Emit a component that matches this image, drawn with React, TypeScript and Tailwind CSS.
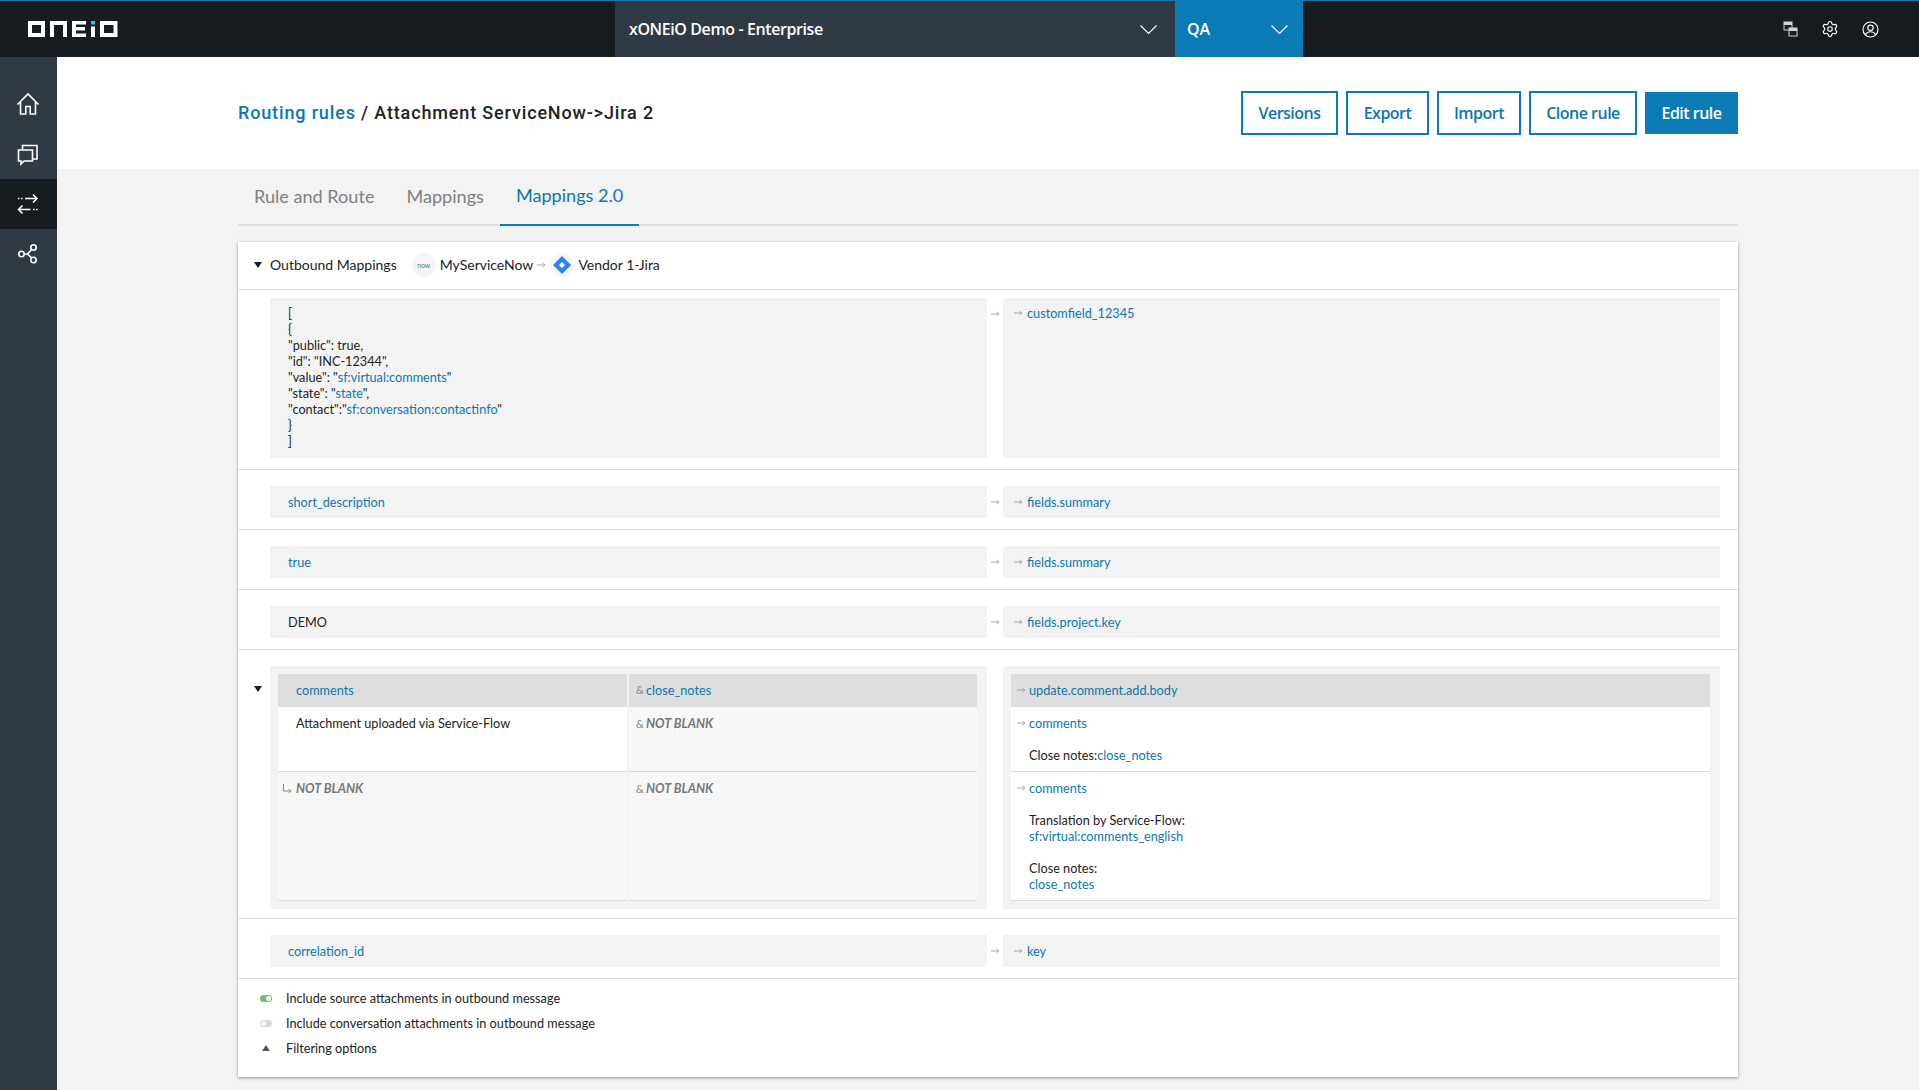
import { Settings } from 'lucide-react';
import type { ReactNode } from 'react';

// small helpers for the repeated glyphs
function Arrow({ className = '' }: { className?: string }) {
  return (
    <svg width="9" height="6" viewBox="0 0 9 6" fill="none" className={`flex-shrink-0 ${className}`} aria-hidden="true">
      <path d="M0 3h7.5M5.5 1l2.500 2-2.500 2" stroke="#a9a9a9" strokeWidth="1" />
    </svg>
  );
}

function Caret({ up = false, className = '' }: { up?: boolean; className?: string }) {
  return (
    <svg width="8" height="6" viewBox="0 0 8 6" className={className} aria-hidden="true">
      <path d={up ? 'M4 0l4 6H0z' : 'M0 0h8L4 6z'} fill={up ? '#555' : '#1c1c1c'} />
    </svg>
  );
}

function Chevron() {
  return (
    <svg width="17" height="9" viewBox="0 0 17 9" fill="none" aria-hidden="true">
      <path d="M.5.5l8 8 8-8" stroke="#fff" strokeWidth="1.1" />
    </svg>
  );
}

function Logo() {
  return (
    <svg width="90" height="17" viewBox="0 0 90 17" aria-hidden="true">
      <path fillRule="evenodd" d="M0 0h17v16H0zM4 4v8h9V4z" fill="#fff" />
      <path d="M22 0h17v16h-4V4h-9v12h-4z" fill="#fff" />
      <path d="M44 0h14v3.5H48V6h9v3.5h-9v3H58V16H44z" fill="#fff" />
      <rect x="63" y="0" width="4" height="3.5" fill="#2cc3e8" />
      <rect x="63" y="5.5" width="4" height="10.5" fill="#fff" />
      <path fillRule="evenodd" d="M72 0h17.5v16H72zM76 4v8h9.5V4z" fill="#fff" />
    </svg>
  );
}

function HomeIcon() {
  return (
    <svg width="24" height="24" viewBox="0 0 24 24" fill="none" stroke="#fff" strokeWidth="1.6" aria-hidden="true">
      <path d="M1.500 12.500L12 2l10.500 10.500M4.500 10v12h5.300v-7.500h4.400V22h5.300V10" />
    </svg>
  );
}

function ChatIcon() {
  return (
    <svg width="24" height="24" viewBox="0 0 24 24" fill="none" stroke="#fff" strokeWidth="1.6" aria-hidden="true">
      <path d="M6.500 8V3.500H21V17h-4" />
      <path d="M2.500 8h14v11H8l-3 3v-3H2.500z" />
    </svg>
  );
}

function RouteIcon() {
  return (
    <svg width="24" height="24" viewBox="0 0 24 24" fill="none" stroke="#fff" strokeWidth="1.5" aria-hidden="true">
      <path d="M9 6.500h12M17 2.500l4 4-4 4" />
      <path d="M2 6.500h1.500M5 6.500h1.500" />
      <path d="M14.500 17.500H2.500M6.500 13.500l-4 4 4 4" />
      <path d="M17 17.500h1.500M20 17.500h1.500" />
    </svg>
  );
}

function ShareIcon() {
  return (
    <svg width="24" height="24" viewBox="0 0 24 24" fill="none" stroke="#fff" strokeWidth="1.6" aria-hidden="true">
      <circle cx="5.500" cy="12" r="2.700" />
      <circle cx="17.500" cy="5.500" r="2.700" />
      <circle cx="17.500" cy="18" r="2.700" />
      <path d="M8.200 12h3.300l4.200-4.500M11.500 12l4.200 4" />
    </svg>
  );
}

function WindowsIcon() {
  return (
    <svg width="15" height="16" viewBox="0 0 15 16" fill="none" aria-hidden="true">
      <rect x="1" y="1" width="8" height="8" stroke="#d4d4d4" strokeWidth="1" fill="#171c20" />
      <rect x="1" y="1" width="8" height="3" fill="#d4d4d4" />
      <rect x="6" y="7" width="8" height="8" stroke="#d4d4d4" strokeWidth="1" fill="#171c20" />
      <rect x="6" y="7" width="8" height="3" fill="#d4d4d4" />
    </svg>
  );
}

function UserIcon() {
  return (
    <svg width="17" height="17" viewBox="0 0 17 17" fill="none" stroke="#fff" strokeWidth="1.1" aria-hidden="true">
      <circle cx="8.500" cy="8.500" r="7.500" />
      <circle cx="8.500" cy="6.800" r="2.700" />
      <path d="M3.500 14c.8-2.300 2.500-3.300 5-3.300s4.200 1 5 3.300" />
    </svg>
  );
}

function Toggle({ on }: { on: boolean }) {
  return (
    <span className={`flex h-[7px] w-[12px] rounded-full items-center ${on ? 'bg-[#6cc070] justify-end' : 'bg-[#d9d9d9] justify-start'}`}>
      <span className={`h-[5px] w-[5px] rounded-full ${on ? 'bg-white mr-px' : 'bg-[#f5f5f5] ml-px'}`} />
    </span>
  );
}

function Link({ children }: { children: ReactNode }) {
  return <span className="text-[#0b77b0]">{children}</span>;
}

function Target({ name }: { name: string }) {
  return (
    <div className="flex items-center gap-[4px] pl-[11px]">
      <Arrow />
      <Link>{name}</Link>
    </div>
  );
}

// one source -> target row of the mapping table
function MappingRow({ source, target }: { source: ReactNode; target: string }) {
  return (
    <div className="flex pt-[16px] pb-[11px] border-b border-[#e0e0e0]">
      <div className="w-[32px]" />
      <div className="w-[717px] h-[32px] pb-[1px] bg-[#f3f3f3] flex items-center pl-[18px]">{source}</div>
      <div className="w-[16px] flex items-center justify-center"><Arrow /></div>
      <div className="w-[717px] h-[32px] pb-[1px] bg-[#f3f3f3] flex items-center"><Target name={target} /></div>
    </div>
  );
}

const buttons = [
  { label: 'Versions', w: 'w-[97px]' },
  { label: 'Export', w: 'w-[83px]' },
  { label: 'Import', w: 'w-[84px]' },
  { label: 'Clone rule', w: 'w-[108px]' },
];

const navItems = [
  { icon: <HomeIcon />, active: false },
  { icon: <ChatIcon />, active: false },
  { icon: <RouteIcon />, active: true },
  { icon: <ShareIcon />, active: false },
];

function Amp() {
  return <span className="inline-block w-[10px] text-[#8a8a8a] text-[11px]">&amp;</span>;
}

function NotBlank() {
  return <span className="italic font-bold text-[#777]">NOT BLANK</span>;
}

export default function App() {
  return (
    <div className="w-[1919px] h-[1090px] overflow-hidden bg-[#f3f3f3] font-['Lato',sans-serif] text-[12.7px] leading-[16px] text-[#222]">
      <header className="h-[57px] border-t border-[#0b7bb6] bg-[#171c20] flex font-['Open_Sans',sans-serif] text-white">
        <div className="w-[615px] pl-[28px] flex items-center">
          <Logo />
        </div>
        <div className="w-[560px] bg-[#2f3a45] flex items-center justify-between pl-[14px] pr-[18px]">
          <span className="text-[16px] font-semibold tracking-[-0.4px]">xONEiO Demo - Enterprise</span>
          <Chevron />
        </div>
        <div className="w-[128px] bg-[#0b7bb6] flex items-center justify-between pl-[12px] pr-[15px]">
          <span className="text-[16px] font-semibold">QA</span>
          <Chevron />
        </div>
        <div className="flex-1 flex items-center justify-end gap-[23px] pr-[40px]">
          <WindowsIcon />
          <Settings size={18} strokeWidth={1.5} color="#fff" />
          <UserIcon />
        </div>
      </header>

      <div className="flex h-[1033px]">
        <aside className="w-[57px] bg-[#2f3a45] pt-[22px] flex-shrink-0">
          {navItems.map((item, index) => (
            <div key={index} className={`h-[50px] pr-[1px] flex items-center justify-center ${item.active ? 'bg-[#171c20]' : ''}`}>
              {item.icon}
            </div>
          ))}
        </aside>

        <main className="flex-1">
          <div className="h-[112px] bg-white pl-[181px] pr-[181px] flex items-center justify-between">
            <h1 className="font-['Roboto',sans-serif] text-[18px] font-medium tracking-[0.85px] text-[#222]">
              <span className="text-[#0b77b0]">Routing rules</span> / Attachment ServiceNow-&gt;Jira 2
            </h1>
            <div className="flex items-center gap-[8px] font-['Open_Sans',sans-serif] text-[16px] font-semibold">
              {buttons.map((button) => (
                <button key={button.label} className={`${button.w} h-[44px] border-2 border-[#0b7bb6] bg-white text-[#0b77b0] tracking-[-0.5px]`}>
                  {button.label}
                </button>
              ))}
              <button className="w-[93px] h-[42px] bg-[#0b7bb6] text-white tracking-[-0.5px]">Edit rule</button>
            </div>
          </div>

          <div className="px-[181px]">
            <nav className="h-[57px] flex border-b-2 border-[#e0e0e0] text-[18.1px] text-[#808080]">
              <div className="px-[16px] pb-[4px] h-[57px] flex items-center">Rule and Route</div>
              <div className="px-[16px] pb-[4px] h-[57px] flex items-center">Mappings</div>
              <div className="px-[16px] pb-[4px] h-[57px] flex items-center text-[#0b77b0] border-b-2 border-[#0b7bb6]">Mappings 2.0</div>
            </nav>

            <section className="mt-[16px] h-[835px] bg-white shadow-[0_1px_3px_rgba(0,0,0,0.4)]">
              <div className="h-[48px] pb-[2px] border-b border-[#e0e0e0] flex items-center pl-[16px] text-[14px]">
                <Caret />
                <span className="ml-[8px]">Outbound Mappings</span>
                <span className="ml-[15px] w-[24px] h-[24px] rounded-full bg-[#f5f5f5] flex items-center justify-center text-[7px] tracking-[-0.2px] text-[#5f7f74]">now</span>
                <span className="ml-[4px]">MyServiceNow</span>
                <Arrow className="ml-[4px]" />
                <span className="ml-[4px] w-[24px] h-[24px] rounded-full bg-[#f5f5f5] flex items-center justify-center">
                  <svg width="18" height="18" viewBox="0 0 18 18" aria-hidden="true">
                    <path d="M9 0l9 9-9 9-9-9z" fill="#2684ff" />
                    <path d="M9 6l3 3-3 3-3-3z" fill="#fff" />
                  </svg>
                </span>
                <span className="ml-[4px]">Vendor 1-Jira</span>
              </div>

              <div className="flex pt-[8px] pb-[11px] border-b border-[#e0e0e0]">
                <div className="w-[32px]" />
                <div className="w-[717px] h-[160px] bg-[#f3f3f3] pt-[7px] pl-[18px]">
                  <div>[</div>
                  <div>{'{'}</div>
                  <div>"public": true,</div>
                  <div>"id": "INC-12344",</div>
                  <div>"value": "<Link>sf:virtual:comments</Link>"</div>
                  <div>"state": "<Link>state</Link>",</div>
                  <div>"contact":"<Link>sf:conversation:contactinfo</Link>"</div>
                  <div>{'}'}</div>
                  <div>]</div>
                </div>
                <div className="w-[16px] h-[32px] flex items-center justify-center"><Arrow /></div>
                <div className="w-[717px] h-[160px] bg-[#f3f3f3] pt-[7px]"><Target name="customfield_12345" /></div>
              </div>

              <MappingRow source={<Link>short_description</Link>} target="fields.summary" />
              <MappingRow source={<Link>true</Link>} target="fields.summary" />
              <MappingRow source="DEMO" target="fields.project.key" />

              <div className="flex pt-[16px] pb-[9px] border-b border-[#e0e0e0]">
                <div className="w-[32px] pl-[16px] pt-[20px]"><Caret /></div>
                <div className="w-[717px] h-[243px] bg-[#f3f3f3] pt-[8px] pl-[8px]">
                  <div className="w-[699px] grid grid-cols-[349px_348px] gap-x-[2px]">
                    <div className="h-[33px] pb-[2px] bg-[#dedede] pl-[18px] flex items-center"><Link>comments</Link></div>
                    <div className="h-[33px] pb-[2px] bg-[#dedede] pl-[7px] flex items-center"><Amp /><Link>close_notes</Link></div>
                    <div className="h-[65px] bg-white border-b border-[#dcdcdc] pl-[18px] pt-[8px]">Attachment uploaded via Service-Flow</div>
                    <div className="h-[65px] bg-[#f7f7f7] border-b border-[#dcdcdc] pl-[7px] pt-[8px]"><Amp /><NotBlank /></div>
                    <div className="h-[129px] bg-[#f7f7f7] border-b border-[#dcdcdc] pl-[5px] pt-[8px] flex items-start">
                      <svg width="9" height="10" viewBox="0 0 9 10" fill="none" className="mt-[4px] mr-[4px]" aria-hidden="true">
                        <path d="M.5 0v7h7M5.500 5l2.500 2-2.500 2" stroke="#8a8a8a" />
                      </svg>
                      <NotBlank />
                    </div>
                    <div className="h-[129px] bg-[#f7f7f7] border-b border-[#dcdcdc] pl-[7px] pt-[8px]"><Amp /><NotBlank /></div>
                  </div>
                </div>
                <div className="w-[16px]" />
                <div className="w-[717px] h-[243px] bg-[#f3f3f3] pt-[8px] pl-[8px]">
                  <div className="w-[699px]">
                    <div className="h-[33px] pb-[2px] bg-[#dedede] pl-[6px] flex items-center gap-[3px]"><Arrow /><Link>update.comment.add.body</Link></div>
                    <div className="h-[65px] bg-white border-b border-[#dcdcdc] pl-[6px] pt-[8px]">
                      <div className="flex items-center gap-[3px]"><Arrow /><Link>comments</Link></div>
                      <div className="pl-[12px] mt-[16px]">Close notes:<Link>close_notes</Link></div>
                    </div>
                    <div className="h-[129px] bg-white border-b border-[#dcdcdc] pl-[6px] pt-[8px]">
                      <div className="flex items-center gap-[3px]"><Arrow /><Link>comments</Link></div>
                      <div className="pl-[12px] mt-[16px]">Translation by Service-Flow:</div>
                      <div className="pl-[12px]"><Link>sf:virtual:comments_english</Link></div>
                      <div className="pl-[12px] mt-[16px]">Close notes:</div>
                      <div className="pl-[12px]"><Link>close_notes</Link></div>
                    </div>
                  </div>
                </div>
              </div>

              <MappingRow source={<Link>correlation_id</Link>} target="key" />

              <div className="pt-[11px] pl-[22px] flex flex-col gap-[9px]">
                <div className="flex items-center gap-[14px]"><Toggle on /><span>Include source attachments in outbound message</span></div>
                <div className="flex items-center gap-[14px]"><Toggle on={false} /><span>Include conversation attachments in outbound message</span></div>
                <div className="flex items-center gap-[14px]"><span className="w-[12px] flex justify-center"><Caret up /></span><span>Filtering options</span></div>
              </div>
            </section>
          </div>
        </main>
      </div>
    </div>
  );
}
